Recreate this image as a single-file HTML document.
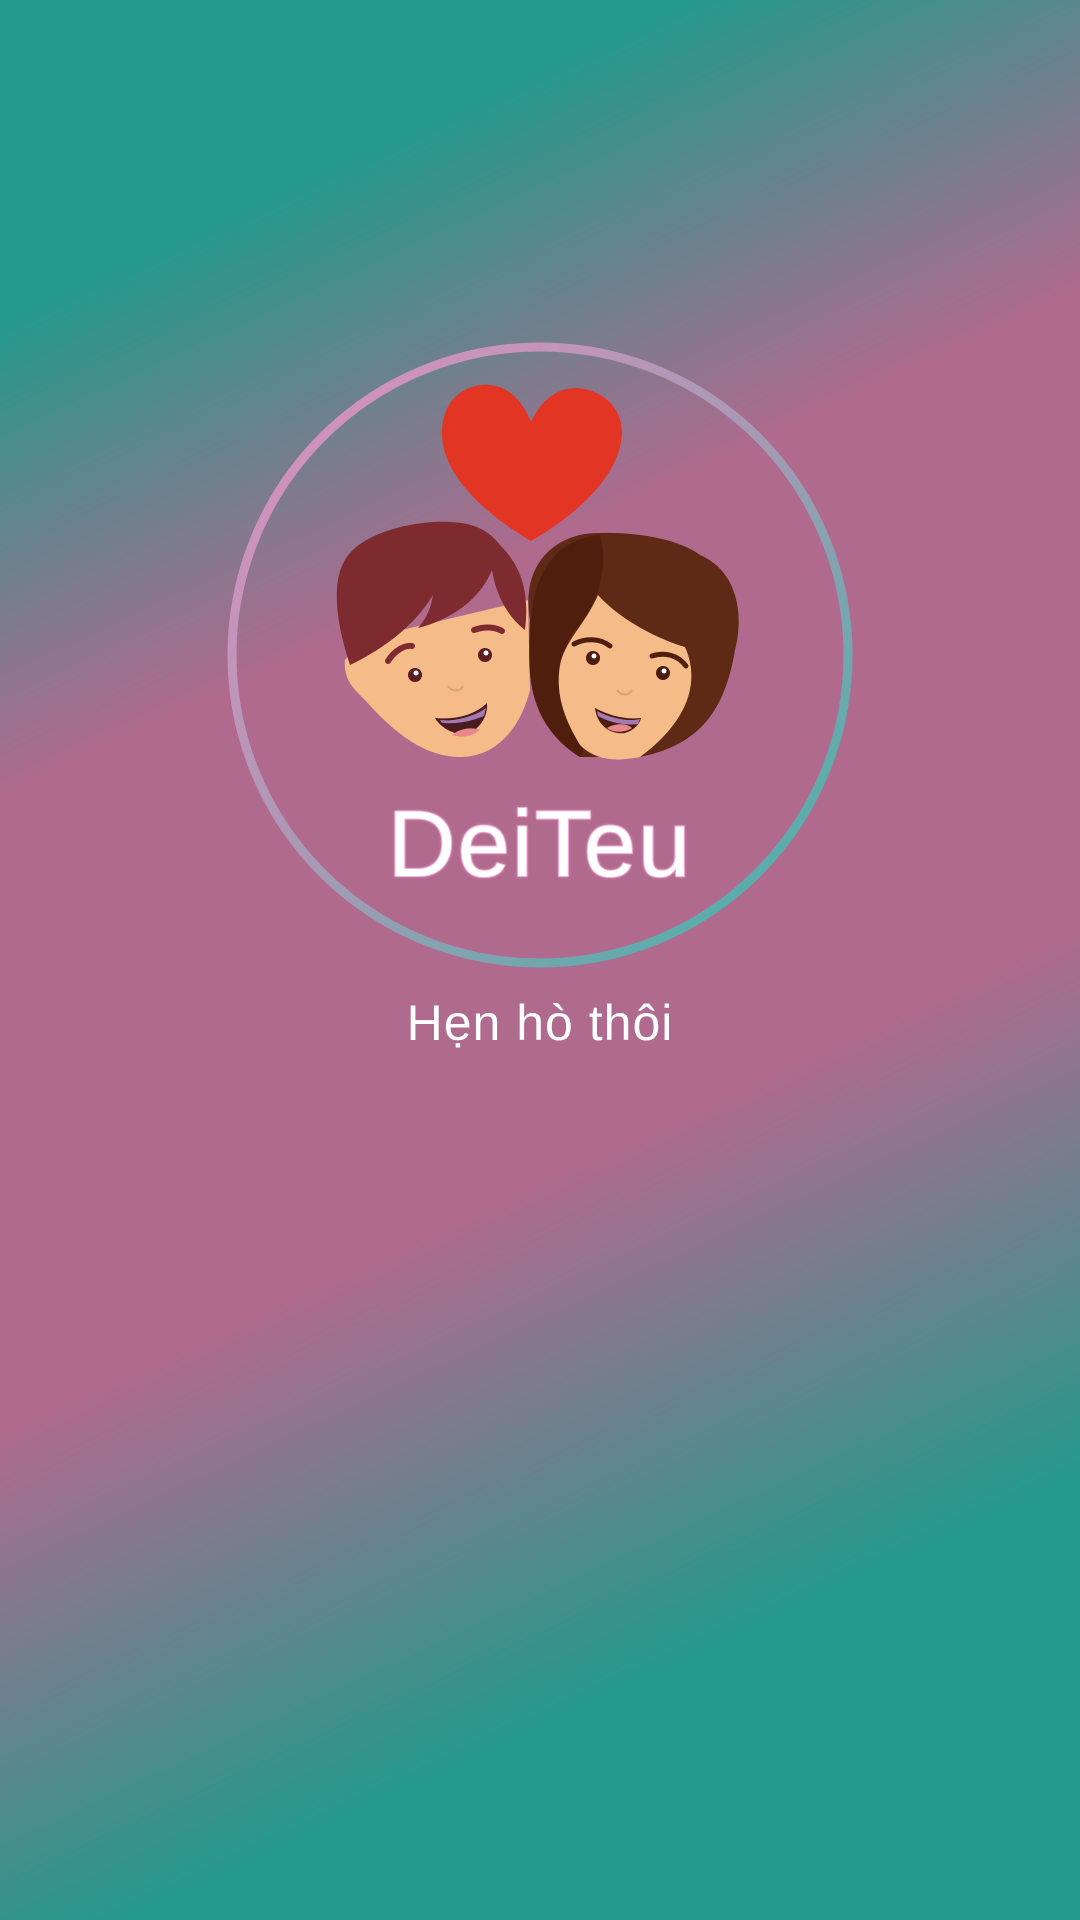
<!DOCTYPE html>
<html><head><meta charset="utf-8"><style>
html,body{margin:0;padding:0}
body{width:1080px;height:1920px;overflow:hidden;position:relative;
background:linear-gradient(155deg,#229a8c 0%,#239a8c 13%,#b06a8e 33%,#b06a8e 59%,#239a8c 82%,#229a8c 100%);
font-family:"Liberation Sans",sans-serif}
svg{position:absolute;left:0;top:0}
.t1{position:absolute;left:0;width:1080px;text-align:center;top:790px;font-size:94px;color:#fff;letter-spacing:2px;
-webkit-text-stroke:2px #f3a9d3;paint-order:stroke fill;text-shadow:0 0 3px #f7b6da}
.t2{position:absolute;left:0;width:1080px;text-align:center;top:994px;font-size:50px;color:#fff;letter-spacing:1px}
</style></head><body>
<svg width="1080" height="1920" viewBox="0 0 1080 1920">
<defs><linearGradient id="rg" x1="0" y1="0" x2="1" y2="1">
<stop offset="0" stop-color="#e08fc0"/><stop offset="0.5" stop-color="#a69ab5"/><stop offset="1" stop-color="#3bb5a8"/></linearGradient></defs>
<circle cx="540" cy="655" r="308" fill="none" stroke="url(#rg)" stroke-width="9"/>
<path d="M531 541 C470 505 440 465 442 430 C444 395 470 383 490 385 C510 387 523 402 531 422 C540 402 556 387 578 388 C600 390 622 405 622 433 C621 470 585 510 531 541Z" fill="#e33524"/>
<path d="M345 660 C343 680 355 690 365 700 C400 740 430 757 460 757 C495 757 520 730 530 690 L528 600 L360 640Z" fill="#f5bb88"/>
<path d="M350 665 C335 620 330 575 350 553 C370 530 420 520 450 522 C480 523 492 535 500 545 C520 565 530 590 525 630 C505 615 495 590 492 570 C480 600 450 620 418 628 C430 615 432 600 433 595 C415 625 385 648 350 665Z" fill="#7d2b2e"/>
<path d="M388 661 C395 650 405 645 412 646" stroke="#7d2b2e" stroke-width="6" fill="none" stroke-linecap="round"/>
<path d="M474 630 C485 626 495 627 502 631" stroke="#7d2b2e" stroke-width="6" fill="none" stroke-linecap="round"/>
<circle cx="415" cy="675" r="7" fill="#5b1e22"/><circle cx="416" cy="673" r="2.5" fill="#fff"/>
<circle cx="485" cy="655" r="7" fill="#5b1e22"/><circle cx="486" cy="653" r="2.5" fill="#fff"/>
<path d="M448 686 C452 692 460 692 463 686" stroke="#e0a070" stroke-width="2" fill="none"/>
<path d="M435 718 C442 730 460 738 472 732 C482 725 488 715 487 703 C475 715 455 720 435 718Z" fill="#4a1c1e"/>
<path d="M440 720 C455 722 475 716 486 708 L484 716 C470 722 455 724 442 723Z" fill="#a57ab2"/>
<path d="M452 735 C460 728 472 727 480 730 C472 737 460 738 452 735Z" fill="#e8888a"/>
<path d="M530 620 C520 560 560 532 600 533 C640 532 680 540 700 555 C735 570 745 610 735 650 C725 710 700 745 640 757 L580 757 C545 735 525 700 530 620Z" fill="#5e2915"/>
<path d="M530 640 C530 580 550 540 600 535 C610 570 595 610 575 630 C560 650 560 680 560 700 C575 730 590 745 580 757 C545 735 525 700 530 640Z" fill="#4f1e0c"/>
<path d="M598 595 C620 620 660 640 685 647 C700 680 690 720 640 757 C615 762 595 760 580 745 C565 720 555 695 560 665 C565 640 585 625 598 595Z" fill="#f5bb88"/>
<path d="M574 644 C585 638 600 638 610 646" stroke="#4f1e0c" stroke-width="5" fill="none" stroke-linecap="round"/>
<path d="M652 656 C665 652 678 655 686 666" stroke="#4f1e0c" stroke-width="5" fill="none" stroke-linecap="round"/>
<circle cx="593" cy="658" r="7" fill="#4a1c10"/><circle cx="594" cy="656" r="2.5" fill="#fff"/>
<circle cx="663" cy="673" r="7" fill="#4a1c10"/><circle cx="664" cy="671" r="2.5" fill="#fff"/>
<path d="M617 690 C621 696 629 696 632 690" stroke="#e0a070" stroke-width="2" fill="none"/>
<path d="M595 708 C597 725 610 735 625 733 C635 730 640 723 641 718 C625 720 608 715 595 708Z" fill="#4a1c10"/>
<path d="M597 711 C610 718 628 722 640 719 L638 724 C625 726 608 722 598 716Z" fill="#a57ab2"/>
<path d="M607 728 C615 723 627 723 632 728 C625 733 613 733 607 728Z" fill="#e8888a"/>
</svg>
<div class="t1">DeiTeu</div>
<div class="t2">Hẹn hò thôi</div>
</body></html>
